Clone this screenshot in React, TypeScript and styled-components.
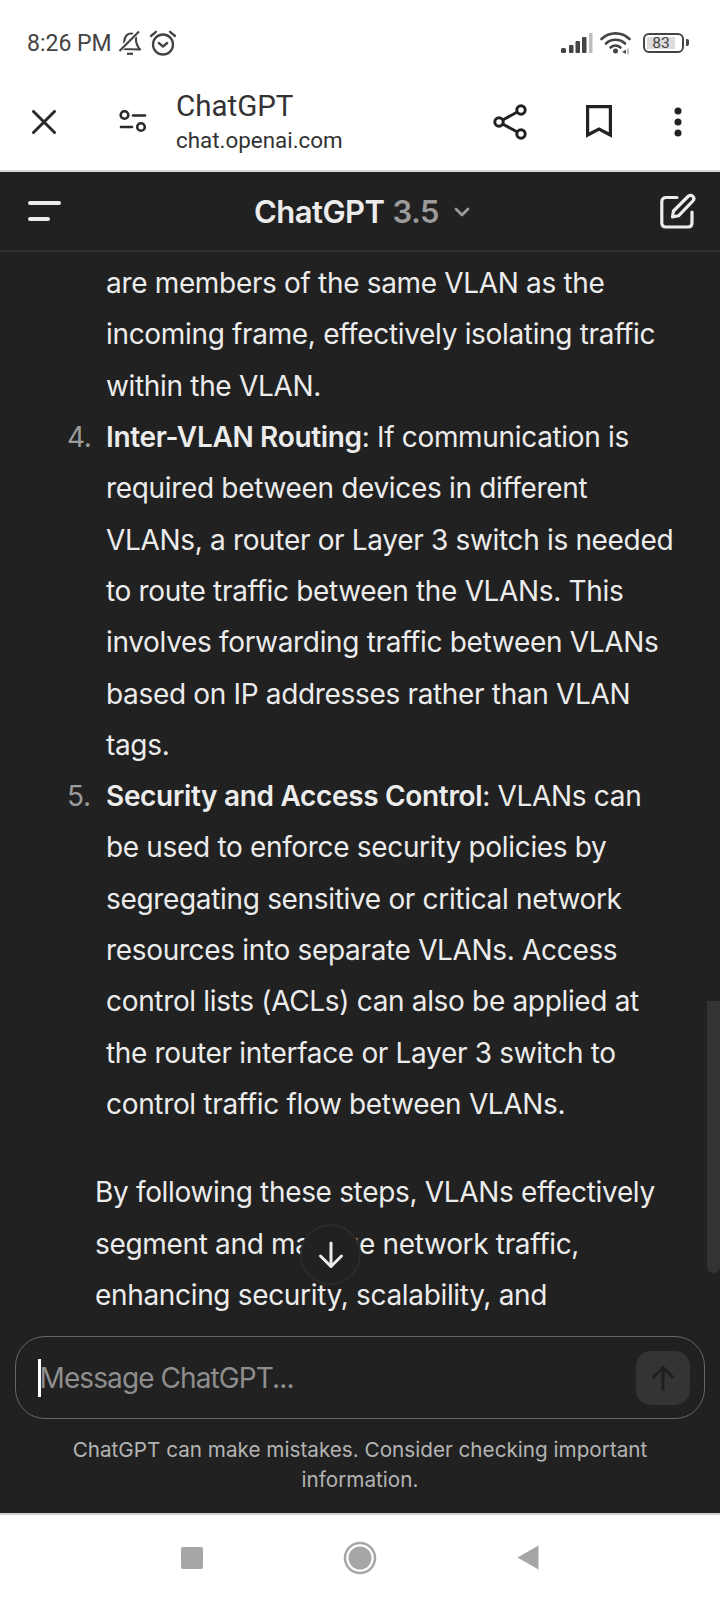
import styled, { createGlobalStyle } from "styled-components";

const GlobalStyle = createGlobalStyle`
  html, body {
    margin: 0;
    padding: 0;
    background: #fff;
  }
`;

const Page = styled.div`
  width: 720px;
  height: 1600px;
  display: flex;
  flex-direction: column;
  overflow: hidden;
  position: relative;
  font-family: Inter, "Liberation Sans", sans-serif;
`;

const Icon = styled.svg<{ $ml?: number }>`
  display: block;
  flex: none;
  margin-left: ${(p) => p.$ml ?? 0}px;
`;

const StatusBar = styled.div`
  height: 73px;
  flex: none;
  display: flex;
  align-items: center;
  justify-content: space-between;
  padding: 13px 36px 0 27px;
  box-sizing: border-box;
  background: #fff;
  color: #444;
`;

const StatusGroup = styled.div`
  display: flex;
  align-items: center;
`;

const Clock = styled.span`
  font-family: Roboto, sans-serif;
  font-size: 23px;
  margin-right: 6px;
`;

const Battery = styled.div`
  width: 41px;
  height: 20px;
  border: 2.5px solid #444;
  border-radius: 6px;
  box-sizing: border-box;
  margin-left: 11px;
  padding: 2px;
  position: relative;
  display: flex;
  &::after {
    content: "";
    position: absolute;
    right: -7px;
    top: 4px;
    width: 3px;
    height: 7px;
    border-radius: 0 2px 2px 0;
    background: #444;
  }
`;

const BatteryLevel = styled.div`
  flex: 1;
  margin-right: 5px;
  background: #dcdcdc;
  font-family: Roboto, sans-serif;
  font-size: 15.5px;
  line-height: 12px;
  text-align: center;
  white-space: nowrap;
  color: #444;
`;

const BrowserBar = styled.div`
  height: 99px;
  flex: none;
  display: flex;
  align-items: center;
  padding: 0 38px 0 32px;
  box-sizing: border-box;
  background: #fff;
  border-bottom: 2px solid #d8d8d8;
`;

const BrowserTitles = styled.div`
  margin-left: 29px;
  flex: 1;
  display: flex;
  flex-direction: column;
  font-family: Roboto, sans-serif;
  color: #333;
`;

const PageTitle = styled.div`
  font-size: 29.5px;
  line-height: 37px;
`;

const PageUrl = styled.div`
  font-size: 22.4px;
  line-height: 30px;
`;

const Chat = styled.div`
  flex: 1;
  min-height: 0;
  display: flex;
  flex-direction: column;
  background: #212121;
  position: relative;
`;

const ChatHeader = styled.div`
  height: 80px;
  flex: none;
  display: flex;
  align-items: center;
  justify-content: space-between;
  padding: 0 24px 0 28px;
  box-sizing: border-box;
  border-bottom: 2px solid #2f2f2f;
`;

const MenuLines = styled.div`
  display: flex;
  flex-direction: column;
  gap: 12px;
  width: 33px;
`;

const MenuLine = styled.div<{ $w: number }>`
  height: 4px;
  border-radius: 2px;
  background: #ececec;
  width: ${(p) => p.$w}px;
`;

const ModelName = styled.div`
  display: flex;
  align-items: center;
  font-size: 31px;
  font-weight: 600;
  letter-spacing: -0.55px;
  color: #ececec;
  margin-left: 3px;
  margin-top: 1px;
`;

const ModelVersion = styled.span`
  color: #9b9b9b;
  margin-left: 8px;
`;

const Thread = styled.div`
  flex: 1;
  min-height: 0;
  overflow: hidden;
  padding-top: 6px;
  color: #ececec;
  font-size: 28px;
  line-height: 51.32px;
  letter-spacing: -0.33px;
  white-space: nowrap;
`;

const List = styled.div`
  padding-left: 106px;
`;

const ListItem = styled.div`
  position: relative;
`;

const Marker = styled.span`
  position: absolute;
  left: -39px;
  color: #9b9b9b;
`;

const Label = styled.span`
  font-weight: 600;
`;

const Paragraph = styled.div`
  margin-top: 37px;
  padding-left: 95px;
`;

const Line = styled.div``;

const ScrollDown = styled.div`
  position: absolute;
  left: 300px;
  top: 1052px;
  width: 61px;
  height: 61px;
  box-sizing: border-box;
  border-radius: 50%;
  border: 2px solid #2b2b2b;
  background: #212121;
  display: flex;
  align-items: center;
  justify-content: center;
`;

const ScrollThumb = styled.div`
  position: absolute;
  right: 0;
  top: 829px;
  width: 13px;
  height: 272px;
  background: #333;
  border-radius: 0 0 7px 7px;
`;

const Composer = styled.div`
  flex: none;
  padding: 0 15px;
`;

const InputBox = styled.div`
  height: 83px;
  box-sizing: border-box;
  border: 1.5px solid #676767;
  border-radius: 30px;
  display: flex;
  align-items: center;
  justify-content: space-between;
  padding: 0 14px 0 22px;
  background: #212121;
`;

const Placeholder = styled.div`
  display: flex;
  align-items: center;
  font-size: 28px;
  letter-spacing: -0.9px;
  color: #8e8e8e;
`;

const Caret = styled.span`
  width: 2.5px;
  height: 38px;
  background: #fff;
  margin-right: -1px;
`;

const SendButton = styled.div`
  width: 54px;
  height: 54px;
  border-radius: 15px;
  background: #343434;
  display: flex;
  align-items: center;
  justify-content: center;
`;

const Disclaimer = styled.div`
  flex: none;
  height: 94px;
  box-sizing: border-box;
  padding-top: 16px;
  text-align: center;
  color: #b4b4b4;
  font-size: 20.7px;
  line-height: 30px;
`;

const NavBar = styled.div`
  height: 87px;
  flex: none;
  box-sizing: border-box;
  background: #fff;
  border-top: 2px solid #d0d0d0;
  display: grid;
  grid-template-columns: repeat(3, 168px);
  justify-content: center;
  align-items: center;
  justify-items: center;
`;

const Bell = () => (
  <Icon width="24" height="26" viewBox="0 0 24 26" fill="none" stroke="#444" strokeWidth="2.2" strokeLinejoin="round">
    <path d="M4 19 C6.5 16 6 13 6.500 10 C7.300 6 10 3.500 13 3.500 C16 3.500 18 6 18 9.500 C18 13.500 19 16 22 19.500 Z" />
    <path d="M1 21 L21 1" stroke="#fff" strokeWidth="4.500" />
    <path d="M1.500 21 L21 1.500" />
    <path d="M9 23.800 H15" />
  </Icon>
);

const Alarm = () => (
  <Icon $ml={7} width="28" height="26" viewBox="0 0 28 26" fill="none" stroke="#444" strokeWidth="2.3" strokeLinecap="round" strokeLinejoin="round">
    <circle cx="14" cy="14.500" r="10" />
    <path d="M9.800 13 L14 16.500 L18.200 13" />
    <path d="M2 6 L7 1.800" />
    <path d="M26 6 L21 1.800" />
  </Icon>
);

const Signal = () => (
  <Icon width="32" height="20" viewBox="0 0 32 20">
    <rect x="0" y="15" width="5" height="5" rx="1.500" fill="#444" />
    <rect x="8" y="12" width="4.500" height="8" rx="1" fill="#444" />
    <rect x="14.500" y="8" width="4.500" height="12" rx="1" fill="#444" />
    <rect x="21" y="4" width="4.500" height="16" rx="1" fill="#444" />
    <rect x="28" y="0" width="3.500" height="20" fill="#bdbdbd" />
  </Icon>
);

const Wifi = () => (
  <Icon $ml={7} width="32" height="24" viewBox="0 0 32 24" fill="none" stroke="#444" strokeWidth="2.600" strokeLinecap="round">
    <path d="M1.500 8 C9 0.500 22 0.500 29.500 8" />
    <path d="M6 12.500 C11 7.500 20 7.500 25 12.500" />
    <path d="M10.500 16.500 C13.500 14 17.500 14 20.500 16.500" />
    <circle cx="15.500" cy="20" r="2.500" fill="#444" stroke="none" />
    <path d="M22 21 L26 18.500 V23 Z" fill="#555" stroke="none" />
    <path d="M28 18 V23" stroke="#aaa" strokeWidth="1.500" />
  </Icon>
);

const CloseIcon = () => (
  <Icon width="24" height="24" viewBox="0 0 24 24" fill="none" stroke="#2a2a2a" strokeWidth="3" strokeLinecap="round">
    <path d="M1.500 1.500 L22.500 22.500" />
    <path d="M22.500 1.500 L1.500 22.500" />
  </Icon>
);

const SiteInfo = () => (
  <Icon $ml={63} width="28" height="24" viewBox="0 0 28 24" fill="none" stroke="#2a2a2a" strokeWidth="2.600" strokeLinecap="round">
    <circle cx="5.500" cy="5" r="3.800" />
    <path d="M14 5.500 H26" />
    <path d="M2 17 H13" />
    <circle cx="22" cy="17" r="3.800" />
  </Icon>
);

const ShareIcon = () => (
  <Icon width="36" height="38" viewBox="0 0 36 38" fill="none" stroke="#222" strokeWidth="3">
    <circle cx="29" cy="7" r="4.200" />
    <circle cx="7" cy="19" r="4.200" />
    <circle cx="29" cy="31" r="4.200" />
    <path d="M10.700 17 L25.300 9" />
    <path d="M10.700 21 L25.300 29" />
  </Icon>
);

const BookmarkIcon = () => (
  <Icon $ml={58} width="26" height="33" viewBox="0 0 26 33" fill="none" stroke="#222" strokeWidth="3.200">
    <path d="M1.600 1.600 H24.400 V30 L13 24 L1.600 30 Z" />
  </Icon>
);

const MoreIcon = () => (
  <Icon $ml={62} width="8" height="30" viewBox="0 0 8 30" fill="#222">
    <circle cx="4" cy="4" r="3.500" />
    <circle cx="4" cy="15" r="3.500" />
    <circle cx="4" cy="26" r="3.500" />
  </Icon>
);

const Chevron = () => (
  <Icon $ml={15} width="16" height="10" viewBox="0 0 16 10" fill="none" stroke="#9b9b9b" strokeWidth="2.800" strokeLinecap="round" strokeLinejoin="round">
    <path d="M2 2 L8 8 L14 2" />
  </Icon>
);

const EditIcon = () => (
  <Icon width="36" height="36" viewBox="0 0 36 36" fill="none" stroke="#ececec" strokeWidth="3.200" strokeLinecap="round" strokeLinejoin="round">
    <path d="M17 4.500 H6 C3.500 4.500 1.800 6 1.800 8.500 V30 C1.800 32.500 3.500 34 6 34 H28 C30.500 34 32 32.500 32 30 V19" />
    <path d="M12.500 24 L13.500 18 L28 3.500 C29.500 2 31.500 2 32.800 3.300 C34.200 4.700 34.200 6.500 32.800 8 L18.500 22.800 Z" />
  </Icon>
);

const ArrowDown = () => (
  <Icon width="26" height="28" viewBox="0 0 26 28" fill="none" stroke="#ececec" strokeWidth="3" strokeLinecap="round" strokeLinejoin="round">
    <path d="M13 2 V25" />
    <path d="M2.500 15 L13 25.500 L23.500 15" />
  </Icon>
);

const ArrowUp = () => (
  <Icon width="24" height="26" viewBox="0 0 24 26" fill="none" stroke="#1f1f1f" strokeWidth="3" strokeLinecap="round" strokeLinejoin="round">
    <path d="M12 24 V2.500" />
    <path d="M2.500 12 L12 2.500 L21.500 12" />
  </Icon>
);

const NavSquare = () => (
  <Icon width="22" height="22" viewBox="0 0 22 22">
    <rect width="22" height="22" rx="2" fill="#a6a6a6" />
  </Icon>
);

const NavHome = () => (
  <Icon width="34" height="34" viewBox="0 0 34 34">
    <circle cx="17" cy="17" r="15" fill="none" stroke="#a6a6a6" strokeWidth="2.500" />
    <circle cx="17" cy="17" r="11.500" fill="#a6a6a6" />
  </Icon>
);

const NavBack = () => (
  <Icon width="22" height="25" viewBox="0 0 22 25">
    <path d="M0.500 12.500 L21.500 0.500 V24.500 Z" fill="#a6a6a6" />
  </Icon>
);

const items: { num?: string; label?: string; lines: string[] }[] = [
  {
    lines: [
      "are members of the same VLAN as the",
      "incoming frame, effectively isolating traffic",
      "within the VLAN.",
    ],
  },
  {
    num: "4.",
    label: "Inter-VLAN Routing",
    lines: [
      ": If communication is",
      "required between devices in different",
      "VLANs, a router or Layer 3 switch is needed",
      "to route traffic between the VLANs. This",
      "involves forwarding traffic between VLANs",
      "based on IP addresses rather than VLAN",
      "tags.",
    ],
  },
  {
    num: "5.",
    label: "Security and Access Control",
    lines: [
      ": VLANs can",
      "be used to enforce security policies by",
      "segregating sensitive or critical network",
      "resources into separate VLANs. Access",
      "control lists (ACLs) can also be applied at",
      "the router interface or Layer 3 switch to",
      "control traffic flow between VLANs.",
    ],
  },
];

const closing = [
  "By following these steps, VLANs effectively",
  "segment and manage network traffic,",
  "enhancing security, scalability, and",
];

function App() {
  return (
    <Page>
      <GlobalStyle />
      <StatusBar>
        <StatusGroup>
          <Clock>8:26 PM</Clock>
          <Bell />
          <Alarm />
        </StatusGroup>
        <StatusGroup>
          <Signal />
          <Wifi />
          <Battery>
            <BatteryLevel>83</BatteryLevel>
          </Battery>
        </StatusGroup>
      </StatusBar>

      <BrowserBar>
        <CloseIcon />
        <SiteInfo />
        <BrowserTitles>
          <PageTitle>ChatGPT</PageTitle>
          <PageUrl>chat.openai.com</PageUrl>
        </BrowserTitles>
        <ShareIcon />
        <BookmarkIcon />
        <MoreIcon />
      </BrowserBar>

      <Chat>
        <ChatHeader>
          <MenuLines>
            <MenuLine $w={33} />
            <MenuLine $w={22} />
          </MenuLines>
          <ModelName>
            ChatGPT<ModelVersion>3.5</ModelVersion>
            <Chevron />
          </ModelName>
          <EditIcon />
        </ChatHeader>

        <Thread>
          <List>
            {items.map((item, i) => (
              <ListItem key={i}>
                {item.lines.map((line, j) => (
                  <Line key={j}>
                    {j === 0 && item.num && <Marker>{item.num}</Marker>}
                    {j === 0 && item.label && <Label>{item.label}</Label>}
                    {line}
                  </Line>
                ))}
              </ListItem>
            ))}
          </List>
          <Paragraph>
            {closing.map((line) => (
              <Line key={line}>{line}</Line>
            ))}
          </Paragraph>
        </Thread>

        <ScrollThumb />
        <ScrollDown>
          <ArrowDown />
        </ScrollDown>

        <Composer>
          <InputBox>
            <Placeholder>
              <Caret />
              Message ChatGPT...
            </Placeholder>
            <SendButton>
              <ArrowUp />
            </SendButton>
          </InputBox>
        </Composer>

        <Disclaimer>
          <Line>ChatGPT can make mistakes. Consider checking important</Line>
          <Line>information.</Line>
        </Disclaimer>
      </Chat>

      <NavBar>
        <NavSquare />
        <NavHome />
        <NavBack />
      </NavBar>
    </Page>
  );
}

export default App;
